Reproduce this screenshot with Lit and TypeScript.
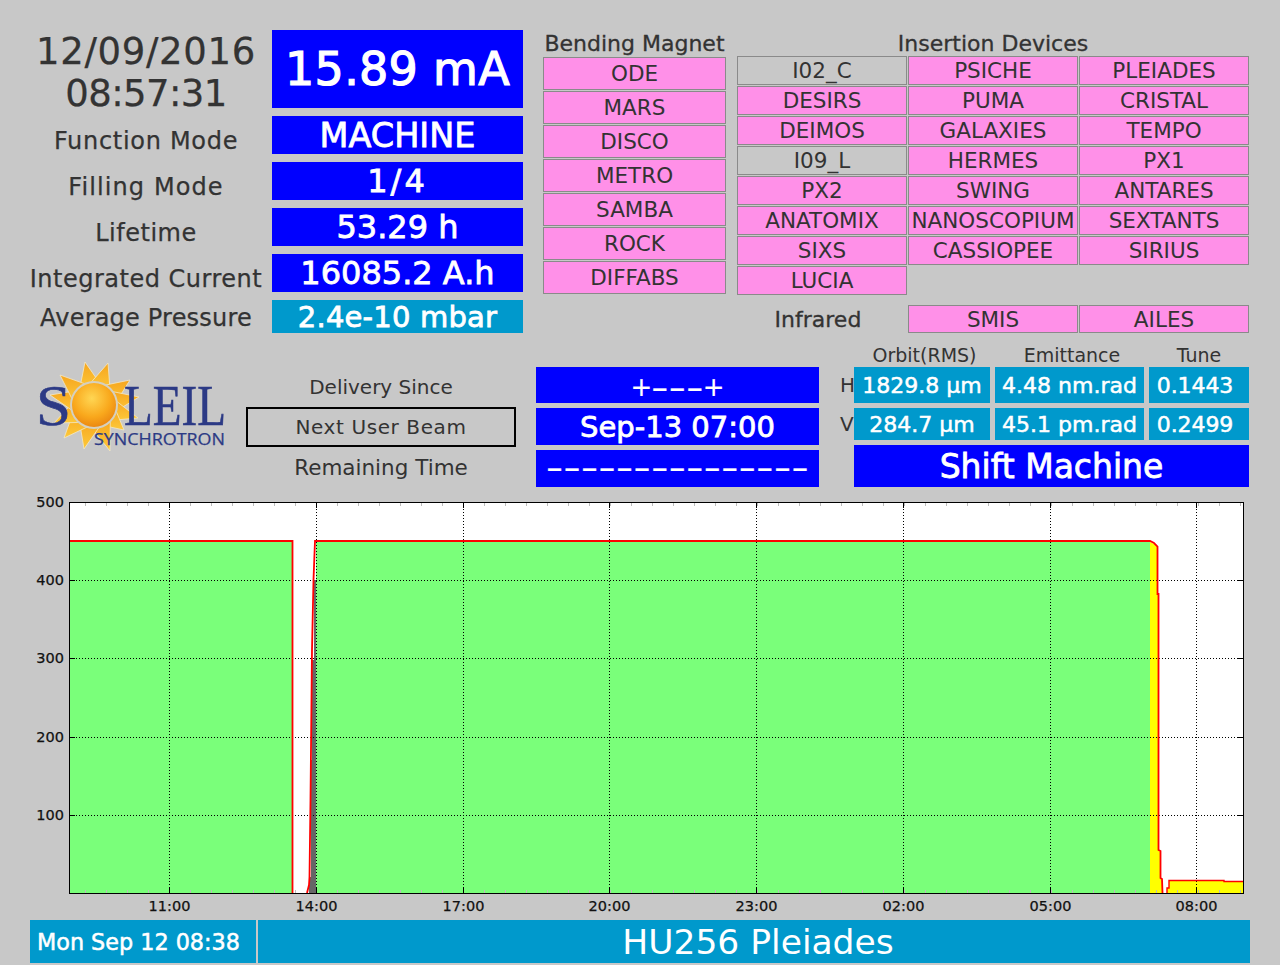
import { LitElement, html, css, svg } from "lit";
import { customElement } from "lit/decorators.js";

const BENDING = ["ODE", "MARS", "DISCO", "METRO", "SAMBA", "ROCK", "DIFFABS"];
const INSERTION: [string, boolean][] = [
  ["I02_C", false], ["PSICHE", true], ["PLEIADES", true],
  ["DESIRS", true], ["PUMA", true], ["CRISTAL", true],
  ["DEIMOS", true], ["GALAXIES", true], ["TEMPO", true],
  ["I09_L", false], ["HERMES", true], ["PX1", true],
  ["PX2", true], ["SWING", true], ["ANTARES", true],
  ["ANATOMIX", true], ["NANOSCOPIUM", true], ["SEXTANTS", true],
  ["SIXS", true], ["CASSIOPEE", true], ["SIRIUS", true],
  ["LUCIA", true],
];
const Y_TICKS: [string, number][] = [["500", 502], ["400", 580], ["300", 658], ["200", 737], ["100", 815]];
const X_TICKS: [string, number][] = [["11:00", 169.5], ["14:00", 316.5], ["17:00", 463.5], ["20:00", 609.5], ["23:00", 756.5], ["02:00", 903.5], ["05:00", 1050.5], ["08:00", 1196.5]];

function rays() {
  const cx = 94, cy = 405;
  const out: string[] = [];
  const tips: [number, number][] = [
    [85, 362], [108, 363], [130, 380], [139, 397], [138, 418], [124, 430],
    [110, 451], [84, 449], [64, 438], [54, 423], [50, 395], [60, 375],
  ];
  tips.forEach(([x, y]) => {
    const dx = x - cx, dy = y - cy;
    const l = Math.hypot(dx, dy);
    const nx = -dy / l, ny = dx / l;
    const bx = cx + dx / l * 18, by = cy + dy / l * 18;
    out.push(`${x},${y} ${bx + nx * 11},${by + ny * 11} ${bx - nx * 11},${by - ny * 11}`);
  });
  return out;
}

@customElement("app-root")
export class AppRoot extends LitElement {
  static styles = css`
    :host { display: block; width: 1280px; height: 965px; background: #c8c8c8; overflow: hidden;
      font-family: "DejaVu Sans", sans-serif; color: #333; }
    .page { display: flex; flex-direction: column; padding-top: 30px; }
    .top { display: flex; height: 303px; margin: 0 30px; }
    .status { width: 493px; display: grid; grid-template-columns: 232px 251px; column-gap: 10px; row-gap: 8px;
      grid-template-rows: 78px 38px 38px 38px 38px 33px; }
    .lab { display: flex; align-items: center; justify-content: center; text-align: center; font-size: 24px;
      padding-top: 12px; white-space: nowrap; letter-spacing: .5px; -webkit-text-stroke: .25px #333; }
    .lab.date { font-size: 37px; line-height: 42px; padding-top: 1px; letter-spacing: .65px; display: block; }
    .lab.date span { display: block; }
    .lab.date .time { letter-spacing: -.6px; }
    .lab.fm { letter-spacing: .7px; }
    .lab.fl { letter-spacing: 1.1px; }
    .lab.last { padding-top: 2px; letter-spacing: .2px; }
    .val { background: #0000ff; color: #fff; display: flex; align-items: center; justify-content: center;
      font-size: 32px; white-space: nowrap; -webkit-text-stroke: .8px #fff; }
    .val.mach { font-size: 33.5px; }
    .val.frac { letter-spacing: 3px; }
    .val.big { font-size: 46px; -webkit-text-stroke: 1.2px #fff; letter-spacing: .3px; }
    .val.cy { background: #0099cc; font-size: 29px; letter-spacing: .2px; }
    .val.thin { font-size: 30px; -webkit-text-stroke: .2px #fff; }
    .val.plus { padding-top: 4px; box-sizing: border-box; }
    .val.line { padding-bottom: 2px; box-sizing: border-box; }
    .val.lg { font-size: 29px; }
    .val.cell { background: #0099cc; font-size: 22px; -webkit-text-stroke: .5px #fff; }
    .val.tune { padding-right: 8px; box-sizing: border-box; letter-spacing: -.1px; }
    .val.shift { font-size: 33px; }
    .sym { font-size: 26px; }
    .dash { display: inline-block; transform: scaleX(1.62); }
    .dash.three { margin: 0 9px; }
    .bending { width: 183px; margin-left: 20px; display: flex; flex-direction: column; }
    .title { height: 27px; font-size: 22px; display: flex; align-items: center; justify-content: center;
      white-space: nowrap; box-sizing: border-box; padding-bottom: 1px; -webkit-text-stroke: .3px #333; }
    .list { display: flex; flex-direction: column; gap: 1px; }
    .dev { box-sizing: border-box; border: 1px solid #8a8a8a; background: #ff90e8; display: flex; align-items: center;
      justify-content: center; font-size: 21.5px; white-space: nowrap; overflow: hidden; }
    .dev.off { background: #c8c8c8; }
    .bending .dev { height: 33px; }
    .insertion { width: 512px; margin-left: 11px; display: flex; flex-direction: column; }
    .insertion .title { height: 26px; padding-bottom: 0; }
    .grid3 { display: grid; grid-template-columns: repeat(3, 170px); grid-auto-rows: 29px; gap: 1px; }
    .ir { margin-top: 10px; grid-auto-rows: 28px; }
    .ir-lab { display: flex; align-items: center; justify-content: center; font-size: 22px; padding-right: 8px;
      -webkit-text-stroke: .3px #333; }
    .mid { display: flex; height: 144px; margin: 10px 30px 0; }
    .logo { width: 216px; height: 144px; flex: none; }
    .info { width: 270px; flex: none; padding-top: 24px; display: flex; flex-direction: column; box-sizing: border-box; }
    .info div { height: 40px; display: flex; align-items: center; justify-content: center; font-size: 21.5px; white-space: nowrap; box-sizing: border-box; }
    .info .since { font-size: 20px; }
    .info .next { border: 2px solid #000; font-size: 20px; letter-spacing: .6px; }
    .next-col { width: 283px; flex: none; margin-left: 20px; padding-top: 24px; display: grid; box-sizing: border-box;
      grid-template-rows: 36px 37px 37px; row-gap: 5px; }
    .beam { width: 409px; flex: none; margin-left: 21px; display: grid;
      grid-template-columns: 9px 136px 149px 100px; column-gap: 5px; grid-template-rows: 24px 41px 37px 42px; }
    .beam .r2 { margin-bottom: 5px; }
    .beam .hdr { font-size: 19px; display: flex; align-items: center; justify-content: center; white-space: nowrap; }
    .beam .hdr.sh { padding-left: 5px; box-sizing: border-box; }
    .beam .side { font-size: 20px; display: flex; align-items: center; white-space: nowrap; padding-bottom: 5px; }
    .beam .shift { grid-column: 2 / -1; }
    .chart { display: block; width: 1280px; height: 430px; margin-top: 3px; }
    .chart text { font-family: "DejaVu Sans", sans-serif; font-size: 14.5px; fill: #111; stroke: #111; stroke-width: .25px; }
    .foot { display: flex; gap: 2px; height: 43px; margin: 0 30px; color: #fff; }
    .foot .when { width: 226px; flex: none; background: #0099cc; display: flex; align-items: center; padding-left: 7px;
      box-sizing: border-box; font-size: 22.3px; white-space: nowrap; -webkit-text-stroke: .5px #fff; }
    .foot .what { flex: 1; background: #0099cc; display: flex; align-items: center; justify-content: center; font-size: 34.5px;
      padding-left: 8px; white-space: nowrap; }
    .logo text { fill: #2c3a85; stroke: #2c3a85; }
    .logo .serif { font-family: "Liberation Serif", serif; font-size: 58px; stroke-width: .6px; }
    .logo .sans { font-family: "Open Sans", sans-serif; font-size: 16.5px; stroke-width: .25px; }
  `;

  private logo() {
    return html`<svg class="logo" viewBox="30 343 216 144" role="img" aria-label="Soleil Synchrotron logo">
      <defs>
        <radialGradient id="ball" cx="45%" cy="35%" r="70%">
          <stop offset="0" stop-color="#ffd653"></stop>
          <stop offset=".6" stop-color="#f9a81c"></stop>
          <stop offset="1" stop-color="#e9820f"></stop>
        </radialGradient>
        <linearGradient id="ray" x1="0" y1="0" x2="0" y2="1">
          <stop offset="0" stop-color="#f6a51e"></stop>
          <stop offset="1" stop-color="#fdc93a"></stop>
        </linearGradient>
      </defs>
      ${rays().map((p) => svg`<polygon points=${p} fill="url(#ray)" stroke="#f3e9c8" stroke-width=".8"></polygon>`)}
      <text class="serif" x="36" y="425" textLength="35" lengthAdjust="spacingAndGlyphs">S</text>
      <circle cx="94" cy="405" r="24" fill="#d5d0c0"></circle>
      <circle cx="94" cy="405" r="22" fill="url(#ball)"></circle>
      <text class="serif" transform="translate(124 425) scale(.812 1)">LEIL</text>
      <text class="sans" x="94" y="445" textLength="131" lengthAdjust="spacingAndGlyphs">SYNCHROTRON</text>
    </svg>`;
  }

  private plot() {
    const minors: number[] = [];
    for (let x = 85.5; x < 1243; x += 21) minors.push(x);
    return html`<svg class="chart" viewBox="0 490 1280 430" role="img" aria-label="Beam current history">
      <rect x="69.5" y="502.5" width="1174" height="391" fill="#fff"></rect>
      <path d="M70 542H293V893H70Z" fill="#7aff7a"></path>
      <path d="M316 542H1150V893H316Z" fill="#7aff7a"></path>
      <path d="M1150 542L1154 544L1157.5 547V594H1158.5V850L1160 851V878L1161.5 879L1162.5 893H1150Z" fill="#ffff00"></path>
      <path d="M1167 893V888H1169V881H1224V882H1244V893Z" fill="#ffff00"></path>
      <path d="M309 893V877H311V760H312V660H314V580H316V893Z" fill="#666"></path>
      ${minors.map((x) => svg`<path d="M${x} 503v3M${x} 893v-3" stroke="#bbb" fill="none"></path>`)}
      ${X_TICKS.map(([, x]) => svg`<path d="M${x} 503V893" stroke="#000" stroke-dasharray="1 2" fill="none"></path>
        <path d="M${x} 503v5M${x} 893v-5" stroke="#000" fill="none"></path>`)}
      ${Y_TICKS.slice(1).map(([, y]) => svg`<path d="M70 ${y + .5}H1243" stroke="#000" stroke-dasharray="1 2" fill="none"></path>
        <path d="M70 ${y + .5}h5M1243 ${y + .5}h-5" stroke="#000" fill="none"></path>`)}
      <path d="M70 541H292.5V893M307 893L309 885L309.5 877L310.5 800L312 650L313.5 580L315 541H1150L1154 543L1157.5 546.5V594H1158.5V850L1160.5 851V878L1162 879L1162.5 893" fill="none" stroke="#f00" stroke-width="1.8"></path>
      <path d="M1167 893V888H1169V880.5H1224V881.5H1243" fill="none" stroke="#f00" stroke-width="1.4"></path>
      <rect x="69.5" y="502.5" width="1174" height="391" fill="none" stroke="#000"></rect>
      ${Y_TICKS.map(([t, y]) => svg`<text x="64" y=${y + 4.5} text-anchor="end">${t}</text>`)}
      ${X_TICKS.map(([t, x]) => svg`<text x=${x} y="911" text-anchor="middle">${t}</text>`)}
    </svg>`;
  }

  render() {
    return html`<div class="page">
      <section class="top">
        <div class="status">
          <div class="lab date"><span>12/09/2016</span><span class="time">08:57:31</span></div><div class="val big">15.89 mA</div>
          <div class="lab fm">Function Mode</div><div class="val mach">MACHINE</div>
          <div class="lab fl">Filling Mode</div><div class="val frac">1/4</div>
          <div class="lab">Lifetime</div><div class="val">53.29 h</div>
          <div class="lab">Integrated Current</div><div class="val">16085.2 A.h</div>
          <div class="lab last">Average Pressure</div><div class="val cy">2.4e-10 mbar</div>
        </div>
        <div class="bending">
          <div class="title">Bending Magnet</div>
          <div class="list">${BENDING.map((b) => html`<div class="dev">${b}</div>`)}</div>
        </div>
        <div class="insertion">
          <div class="title">Insertion Devices</div>
          <div class="grid3">${INSERTION.map(([n, on]) => html`<div class="dev ${on ? "" : "off"}">${n}</div>`)}</div>
          <div class="grid3 ir">
            <div class="ir-lab">Infrared</div>
            <div class="dev">SMIS</div>
            <div class="dev">AILES</div>
          </div>
        </div>
      </section>
      <section class="mid">
        ${this.logo()}
        <div class="info">
          <div class="since">Delivery Since</div>
          <div class="next">Next User Beam</div>
          <div>Remaining Time</div>
        </div>
        <div class="next-col">
          <div class="val thin plus"><span class="sym">+</span><span class="dash three">---</span><span class="sym">+</span></div>
          <div class="val lg">Sep-13 07:00</div>
          <div class="val thin line"><span class="dash">---------------</span></div>
        </div>
        <div class="beam">
          <div></div><div class="hdr sh">Orbit(RMS)</div><div class="hdr sh">Emittance</div><div class="hdr">Tune</div>
          <div class="side">H</div><div class="val cell r2">1829.8 µm</div><div class="val cell r2">4.48 nm.rad</div><div class="val cell r2 tune">0.1443</div>
          <div class="side">V</div><div class="val cell r2">284.7 µm</div><div class="val cell r2">45.1 pm.rad</div><div class="val cell r2 tune">0.2499</div>
          <div class="val shift">Shift Machine</div>
        </div>
      </section>
      ${this.plot()}
      <footer class="foot">
        <div class="when">Mon Sep 12 08:38</div>
        <div class="what">HU256 Pleiades</div>
      </footer>
    </div>`;
  }
}
